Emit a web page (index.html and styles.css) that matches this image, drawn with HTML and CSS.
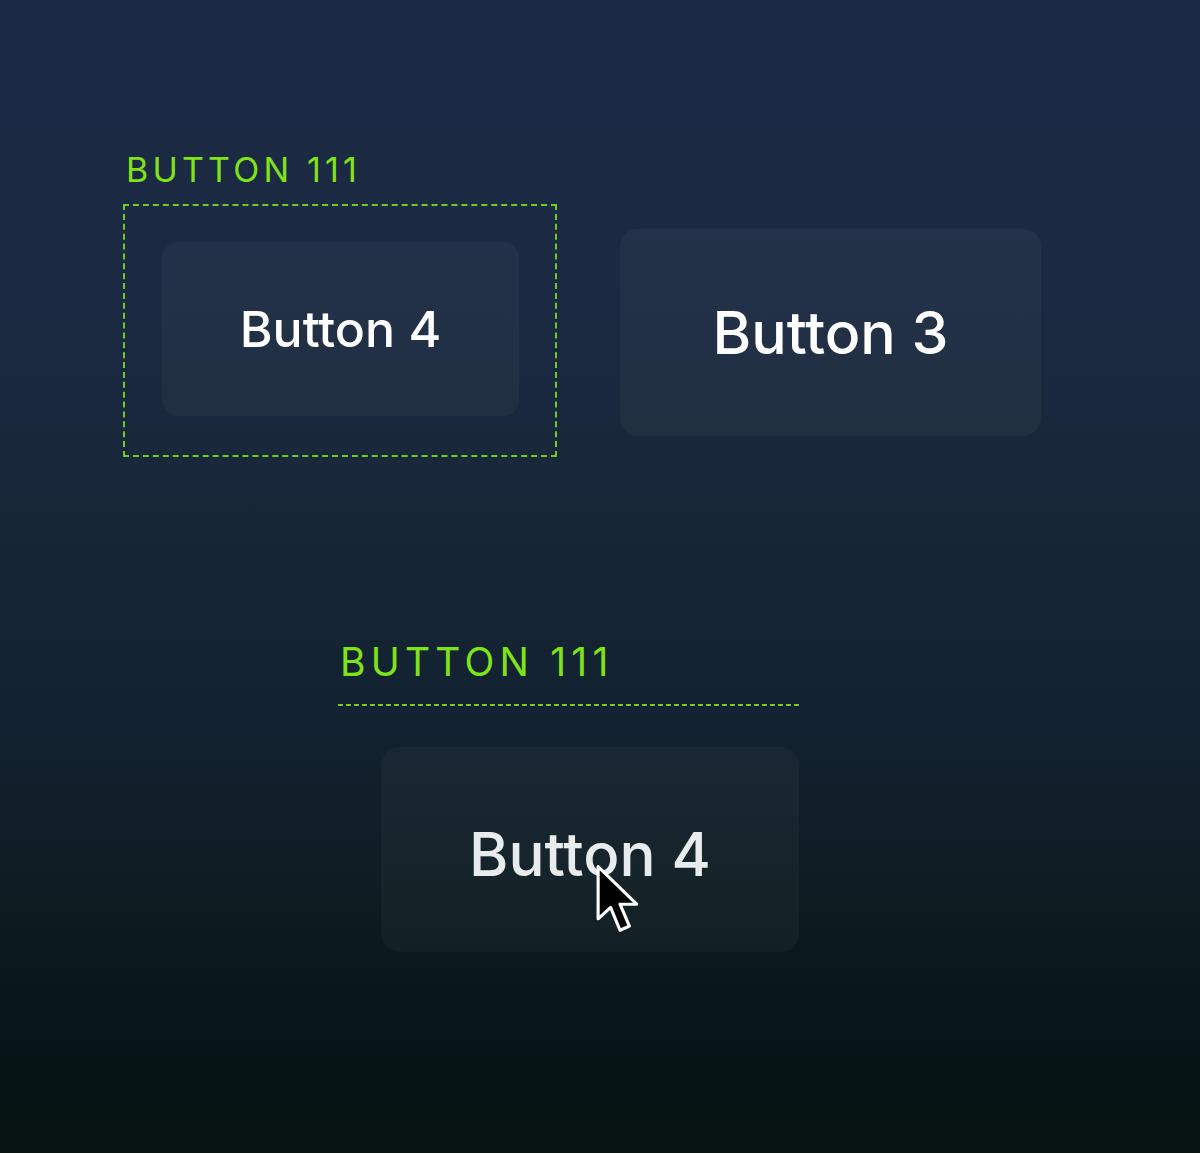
FILE: index.html
```html
<!DOCTYPE html>
<html lang="en">
<head>
<meta charset="utf-8">
<title>Buttons</title>
<link rel="stylesheet" href="styles.css">
</head>
<body>
<div class="page">
  <div class="row-top">
    <div class="group">
      <div class="label label-sm">BUTTON 111</div>
      <div class="frame">
        <div class="btn btn-a">Button 4</div>
      </div>
    </div>
    <div class="btn btn-b">Button 3</div>
  </div>
  <div class="group-bottom">
    <div class="label label-lg">BUTTON 111</div>
    <div class="rule"></div>
    <div class="btn btn-c">
      <span class="btn-text">Button 4</span>
      <svg class="cursor" width="50" height="72" viewBox="0 0 48 68" aria-hidden="true">
        <path d="M3 3 L3 53 L15 42 L24 64 L33 60 L24 39 L40 39 Z" fill="#000" stroke="#fff" stroke-width="3" stroke-linejoin="round"/>
      </svg>
    </div>
  </div>
</div>
</body>
</html>
```

FILE: styles.css
```css
html, body {
  margin: 0;
  padding: 0;
}
body {
  background: #07130f;
  font-family: Inter, "Liberation Sans", Arial, sans-serif;
}
.page {
  box-sizing: border-box;
  height: 1153px;
  padding-top: 153px;
  background: linear-gradient(180deg, #1c2945 0%, #1b2a42 25%, #172637 45%, #122230 62%, #0e1c22 78%, #08151a 88%, #061311 100%);
  overflow: hidden;
}
.row-top {
  display: flex;
  align-items: flex-end;
  gap: 63px;
  padding-left: 123px;
}
.group {
  display: flex;
  flex-direction: column;
}
.label {
  color: #80e31a;
  font-weight: 400;
  white-space: nowrap;
}
.label-sm {
  font-size: 34px;
  line-height: 34px;
  letter-spacing: 4.2px;
  padding-left: 3px;
}
.frame {
  margin-top: 17px;
  border: 2px dashed #6fcb1f;
  padding: 36px 36px 39px 37px;
}
.btn {
  box-sizing: border-box;
  display: flex;
  align-items: center;
  justify-content: center;
  border-radius: 16px;
  background: rgba(255, 255, 255, 0.035);
  color: #ffffff;
  font-weight: 500;
  white-space: nowrap;
}
.btn-a {
  width: 357px;
  height: 174px;
  font-size: 50px;
}
.btn-b {
  width: 421px;
  height: 207px;
  margin-bottom: 21px;
  font-size: 59px;
  border-radius: 18px;
}
.group-bottom {
  margin-top: 185px;
  margin-left: 338px;
  width: 461px;
}
.label-lg {
  font-size: 39px;
  line-height: 39px;
  letter-spacing: 5.2px;
  padding-left: 2px;
}
.rule {
  margin-top: 23px;
  height: 2px;
  background: repeating-linear-gradient(90deg, #6fcb1f 0 5px, transparent 5px 8px);
}
.btn-c {
  position: relative;
  margin-top: 41px;
  margin-left: 43px;
  width: 418px;
  height: 205px;
  font-size: 60px;
  color: #e8ecec;
  border-radius: 18px;
  background: rgba(255, 255, 255, 0.03);
}
.btn-text {
  margin-top: 8px;
}
.cursor {
  position: absolute;
  left: 214px;
  top: 116px;
}
```
